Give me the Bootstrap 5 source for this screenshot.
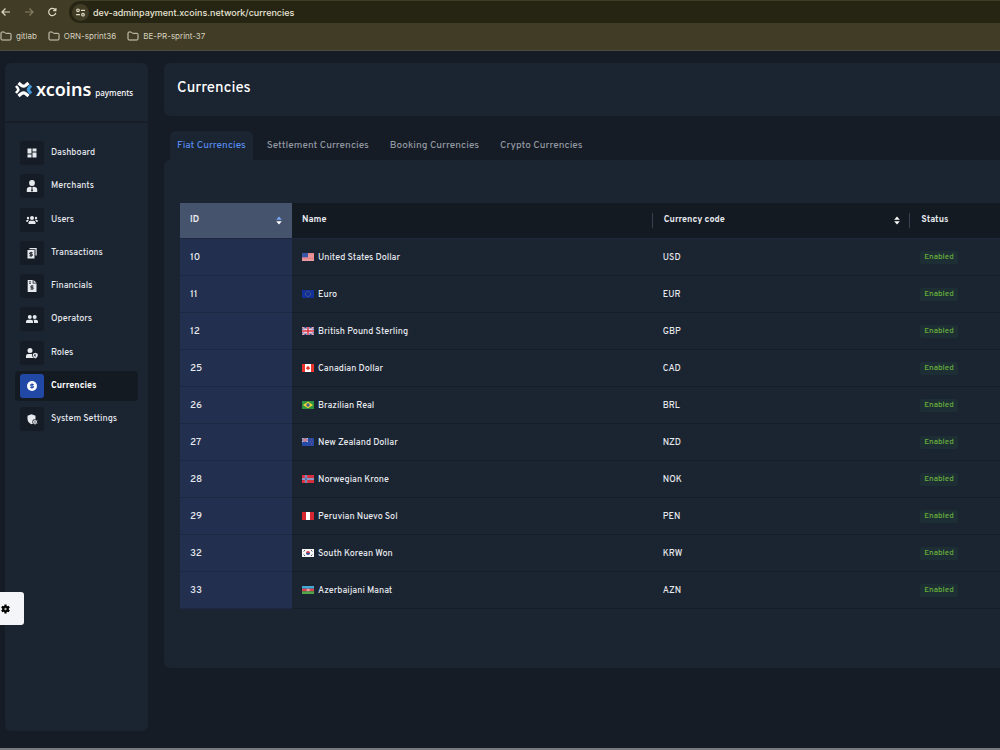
<!DOCTYPE html>
<html lang="en" data-bs-theme="dark">
<head>
<meta charset="utf-8">
<meta name="viewport" content="width=device-width, initial-scale=1">
<title>Currencies</title>
<link href="https://cdn.jsdelivr.net/npm/bootstrap@5.3.0/dist/css/bootstrap.min.css" rel="stylesheet">
<style>
  body { font-family: Overpass, Roboto, "Liberation Sans", sans-serif; font-size: 9px; font-weight: 500; line-height: 14px; background: #161c25; color: #e6e9ee; border-bottom: 2px solid #777b80; overflow-x: hidden; }
  svg { display: block; flex: none; }
  .browser-top { background: #403c26; color: #dedac5; font-family: Inter, sans-serif; height: 51px; border-bottom: 1px solid #4b4a3e; font-size: 8px; font-weight: 400; }
  .address-row { height: 25px; padding: 1px 0 2px 0; }
  .tool-btn { width: 23px; color: inherit; }
  .tool-btn svg { margin-left: -1px; }
  .tool-btn.dim { color: #858064; }
  .address-box { background: #262412; border-radius: 11px 0 0 11px; height: 22px; padding-left: 3px; gap: 4px; }
  .site-info { background: #403c26; width: 17px; height: 17px; color: inherit; }
  .address-box input { font-size: 9px; font-weight: 500; color: #e8e5d6; background: none; outline: 0; height: 20px; }
  .bookmarks { gap: 11px; height: 22px; }
  .bookmarks a { color: #d6d2bf; gap: 4px; }
  .panel { background: #1b2431; border-radius: 6px; }
  .app-shell { padding: 12px 0 17px 5px; gap: 16px; }
  .side-panel { width: 143px; }
  .brand { height: 60px; padding: 0 10px 6px; gap: 4px; border-bottom: 2px solid #171e28; color: #fff; }
  .brand-name { font-family: "Noto Sans", sans-serif; font-size: 18px; line-height: 22px; font-weight: 600; }
  .brand-sub { font-family: "Noto Sans", sans-serif; font-size: 8px; }
  .side-nav { padding: 15px 10px; min-height: 326px; }
  .side-nav .nav-link { height: 30px; padding: 0 5px; gap: 7px; color: #e6e9ee; border-radius: 4px; }
  .side-nav .icon-box { width: 24px; height: 24px; background: #161c25; border-radius: 3px; }
  .side-nav .nav-link.active { background: #141a22; color: #fff; font-weight: 700; }
  .side-nav .active .icon-box { background: #2148a4; }
  .title-panel { height: 53px; padding: 17px 13px; border-radius: 6px 0 0 6px; }
  .title-panel h1 { font-size: 15px; line-height: 18px; font-weight: 500; color: #fff; }
  .tab-strip { padding: 15px 0 0 6px; gap: 7px; }
  .tab-strip .nav-link { height: 29px; padding: 0 7px; font-size: 10px; color: #9298a2; border: 0; border-radius: 6px 6px 0 0; }
  .tab-strip .nav-link.active { background: #1b2431; color: #568aec; }
  .data-panel { padding: 43px 0 59px 16px; border-radius: 6px 0 0 6px; }
  .money-table { table-layout: fixed; width: 100%; color: #e6e9ee; }
  .money-table th { height: 35px; background: #141a22; padding: 0 10px; font-weight: 700; border-bottom: 1px solid #1f2740; }
  .money-table td { height: 37px; padding: 2px 10px 0; border-bottom: 1px solid #161c28; }
  .money-table th:first-child { background: #46536c; }
  .money-table td:first-child { background: #232f4e; border-bottom-color: #1e2842; font-size: 10px; }
  .money-table td svg { margin-bottom: 2px; }
  .col-id { width: 112px; } .col-name { width: 44%; } .col-code { width: 31.4%; }
  .ruled { border-left: 1px solid #374154; height: 15px; margin-left: -11px; padding-left: 11px; }
  .sort-btn { color: #fff; }
  .on-badge { background: #1d2f35; color: #69b03c; font-size: 8px; line-height: 13px; padding: 0 4px; border-radius: 2px; font-weight: 500; vertical-align: middle; }
  .gear-btn { left: 0; bottom: 125px; width: 24px; height: 33px; background: #f4f5f8; color: #000; border-radius: 0 3px 3px 0; padding: 0; }
</style>
</head>
<body class="d-flex flex-column min-vh-100 position-relative">

<svg width="0" height="0" class="position-absolute" aria-hidden="true">
  <symbol id="folder" viewBox="0 0 12 10"><path d="M1 2Q1 1 2 1H4.300L5.500 2.300H10Q11 2.300 11 3.300V8Q11 9 10 9H2Q1 9 1 8Z" fill="none" stroke="currentColor"/></symbol>
  <symbol id="sort" viewBox="0 0 6 9"><path d="M.2 3.700 3 .4 5.800 3.700Z" fill="var(--up, #fff)"/><path d="M.2 5.300 3 8.600 5.800 5.300Z" fill="#fff"/></symbol>
  <symbol id="us" viewBox="0 0 12 8"><path fill="#f2b6b9" d="M0 0h12v8H0z"/><path stroke="#df6a72" stroke-width=".7" d="M0 .4h12M0 1.700h12M0 3h12M0 4.300h12M0 5.600h12M0 7h12"/><path fill="#3b55a5" d="M0 0h6v4.300H0z"/></symbol>
  <symbol id="eu" viewBox="0 0 12 8"><path fill="#12309a" d="M0 0h12v8H0z"/><circle cx="6" cy="4" r="2.500" fill="none" stroke="#7d8158" stroke-width=".8" stroke-dasharray=".7 .6"/></symbol>
  <symbol id="gb" viewBox="0 0 12 8"><path fill="#34489a" d="M0 0h12v8H0z"/><path stroke="#eadfe8" stroke-width="1.600" d="M0 0 12 8M12 0 0 8"/><path stroke="#d4404f" stroke-width=".6" d="M0 0 12 8M12 0 0 8"/><path stroke="#fff" stroke-width="2.800" d="M6 0v8M0 4h12"/><path stroke="#d62f41" stroke-width="1.500" d="M6 0v8M0 4h12"/></symbol>
  <symbol id="ca" viewBox="0 0 12 8"><path fill="#fff" d="M0 0h12v8H0z"/><path fill="#e8332a" d="M0 0h3v8H0zM9 0h3v8H9zM6 1.500l.7 1.300.8-.2-.1 1.200.9.4-1.500 1.300H6.200V6.500h-.4V5.500H5.200L3.700 4.200l.9-.4-.1-1.200.8.2Z"/></symbol>
  <symbol id="br" viewBox="0 0 12 8"><path fill="#2f9440" d="M0 0h12v8H0z"/><path fill="#f4da38" d="M6 .8 11 4 6 7.200 1 4Z"/><circle cx="6" cy="4" r="1.700" fill="#283f86"/><path d="M4.500 3.600Q6 3.500 7.500 4.600" stroke="#ddd" stroke-width=".4" fill="none"/></symbol>
  <symbol id="nz" viewBox="0 0 12 8"><path fill="#244aa5" d="M0 0h12v8H0z"/><path stroke="#dfdce8" stroke-width="1" d="M0 0 6 4M6 0 0 4M3 0v4M0 2h6"/><path stroke="#d4404f" stroke-width=".7" d="M3 0v4M0 2h6"/><path fill="#c84b6d" d="M9 1h.8v.8H9zM8 3h.8v.8H8zM10 3h.8v.8H10zM9 5.500h.9v.9H9z"/></symbol>
  <symbol id="no" viewBox="0 0 12 8"><path fill="#d6303c" d="M0 0h12v8H0z"/><path stroke="#e5dbe8" stroke-width="2.200" d="M4 0v8M0 4h12"/><path stroke="#31509f" stroke-width="1.200" d="M4 0v8M0 4h12"/></symbol>
  <symbol id="pe" viewBox="0 0 12 8"><path fill="#fff" d="M0 0h12v8H0z"/><path fill="#d62631" d="M0 0h4v8H0zM8 0h4v8H8z"/></symbol>
  <symbol id="kr" viewBox="0 0 12 8"><path fill="#f7f7f7" d="M0 0h12v8H0z"/><path fill="#d53743" d="M4 4a2 2 0 0 1 4 0Z"/><path fill="#2a4b99" d="M4 4a2 2 0 0 0 4 0Z"/><path stroke="#222" stroke-width=".8" d="M1.700 2.500 3 1M9 1l1.300 1.500M1.700 5.500 3 7M9 7l1.300-1.500"/></symbol>
  <symbol id="az" viewBox="0 0 12 8"><path fill="#45a9d5" d="M0 0h12v2.700H0z"/><path fill="#dc4350" d="M0 2.700h12v2.600H0z"/><path fill="#52a548" d="M0 5.300h12V8H0z"/><circle cx="5.700" cy="4" r=".9" fill="none" stroke="#fff" stroke-width=".5"/><path fill="#fff" d="M6.700 3.500h1v1h-1z"/></symbol>
</svg>

<header class="browser-top flex-shrink-0">
  <div class="address-row d-flex align-items-center">
    <button class="btn tool-btn p-0" aria-label="Back"><svg width="12" height="10" viewBox="0 0 12 10" fill="none" stroke="currentColor" stroke-width="1.200"><path d="M10 5H2M5.500 1.500 2 5l3.500 3.500"/></svg></button>
    <button class="btn tool-btn dim p-0" aria-label="Forward"><svg width="12" height="10" viewBox="0 0 12 10" fill="none" stroke="currentColor" stroke-width="1.200"><path d="M2 5h8M6.500 1.500 10 5 6.500 8.500"/></svg></button>
    <button class="btn tool-btn p-0" aria-label="Reload"><svg width="12" height="10" viewBox="0 0 12 10" fill="none" stroke="currentColor" stroke-width="1.200"><path d="M9.300 3A3.600 3.600 0 1 0 9.800 5.800M9.900 1v2.700H7.200"/></svg></button>
    <div class="address-box d-flex align-items-center flex-grow-1">
      <button class="btn site-info rounded-circle p-0 d-flex align-items-center justify-content-center" aria-label="Site information"><svg width="11" height="9" viewBox="0 0 11 9" fill="none" stroke="currentColor" stroke-width="1.200"><circle cx="3" cy="2.300" r="1.300"/><path d="M6 2.300h4M1 6.700h4"/><circle cx="8" cy="6.700" r="1.300"/></svg></button>
      <input class="border-0 p-0 flex-grow-1" type="text" aria-label="Address" value="dev-adminpayment.xcoins.network/currencies">
    </div>
  </div>
  <nav class="bookmarks d-flex align-items-center" aria-label="Bookmarks">
    <a href="#" class="d-flex align-items-center text-decoration-none"><svg width="12" height="10"><use href="#folder"/></svg>gitlab</a>
    <a href="#" class="d-flex align-items-center text-decoration-none"><svg width="12" height="10"><use href="#folder"/></svg>ORN-sprint36</a>
    <a href="#" class="d-flex align-items-center text-decoration-none"><svg width="12" height="10"><use href="#folder"/></svg>BE-PR-sprint-37</a>
  </nav>
</header>

<div class="app-shell d-flex flex-grow-1">
  <aside class="side-panel panel flex-shrink-0">
    <div class="brand d-flex align-items-center">
      <svg width="17" height="17" viewBox="0 0 17 17" fill="none" stroke="#fff" stroke-width="3.200" stroke-linejoin="round"><path d="M3.500 2 6.200 4.300Q8.500 6 10.800 4.300L13.500 2M3.500 15l2.700-2.300q2.300-1.700 4.600 0L13.500 15"/><path d="m1 5 1.700 2q1.200 1.500 0 3L1 12" stroke-width="2.600"/><path d="m16 4.500-2 2.500q-1.300 1.500 0 3l2 2.500" stroke="#3f9ad9"/></svg>
      <div class="d-flex align-items-baseline gap-1"><span class="brand-name">xcoins</span><span class="brand-sub">payments</span></div>
    </div>
    <nav class="side-nav nav flex-column flex-nowrap justify-content-between" aria-label="Main">
      <a class="nav-link d-flex align-items-center" href="#"><span class="icon-box d-flex align-items-center justify-content-center"><svg width="12" height="12" viewBox="0 0 12 12" fill="currentColor"><path d="M1.500 1.500h4v5h-4zM6.500 1.500h4v3h-4zM1.500 7.500h4v3h-4zM6.500 5.500h4v5h-4z"/></svg></span>Dashboard</a>
      <a class="nav-link d-flex align-items-center" href="#"><span class="icon-box d-flex align-items-center justify-content-center"><svg width="12" height="12" viewBox="0 0 12 12" fill="currentColor"><circle cx="6" cy="3" r="2.900"/><path d="M.8 12V9.300Q.8 7.300 3 7L5 6.800l.7 1-.6 3.200.9.700.9-.7-.6-3.200.7-1L9 7q2.200.3 2.200 2.300V12Z"/></svg></span>Merchants</a>
      <a class="nav-link d-flex align-items-center" href="#"><span class="icon-box d-flex align-items-center justify-content-center"><svg width="12" height="12" viewBox="0 0 12 12" fill="currentColor"><circle cx="6" cy="4" r="2"/><circle cx="2" cy="4" r="1.200"/><circle cx="10" cy="4" r="1.200"/><path d="M2.500 10V8.500Q2.500 6.700 4.500 6.700h3q2 0 2 1.800V10ZM0 7.700Q0 5.800 1.500 5.800h1.700Q2 6.700 1.900 7.700ZM12 7.700q0-1.900-1.500-1.900H8.800q1.200.9 1.300 1.900Z"/></svg></span>Users</a>
      <a class="nav-link d-flex align-items-center" href="#"><span class="icon-box d-flex align-items-center justify-content-center"><svg width="12" height="12" viewBox="0 0 12 12" fill="currentColor"><path fill-rule="evenodd" d="M3.500 1h7.200v7.500H9.500V2.200h-6ZM1.500 3h7v8.500h-7Z"/><path d="M6.600 5.700H4.300q-.8 0-.8.700t.8.800h1.400q.8 0 .8.800t-.8.800H3.400M5 4.900v4.700" fill="none" stroke="#161c25"/></svg></span>Transactions</a>
      <a class="nav-link d-flex align-items-center" href="#"><span class="icon-box d-flex align-items-center justify-content-center"><svg width="12" height="12" viewBox="0 0 12 12" fill="currentColor"><path d="M1.700 0h5v3.500h3.800V12H1.700ZM7.500 0l3 2.700h-3Z"/><path d="M3 1.800h2M3 3.300h2M7.500 6H5.300q-.7 0-.7.800t.7.700h1.400q.7 0 .7.800t-.7.700H4.500M6 5v5" fill="none" stroke="#161c25" stroke-width=".8"/></svg></span>Financials</a>
      <a class="nav-link d-flex align-items-center" href="#"><span class="icon-box d-flex align-items-center justify-content-center"><svg width="12" height="12" viewBox="0 0 12 12" fill="currentColor"><circle cx="3.800" cy="4" r="2"/><circle cx="8.700" cy="4" r="2"/><path d="M0 10V8.500Q0 6.700 2 6.700h3q2 0 2 1.800V10ZM8 10h4V8.500q0-1.800-2-1.800H7.300Q8 7.400 8 8.500Z"/></svg></span>Operators</a>
      <a class="nav-link d-flex align-items-center" href="#"><span class="icon-box d-flex align-items-center justify-content-center"><svg width="12" height="12" viewBox="0 0 12 12" fill="currentColor"><circle cx="4" cy="3.500" r="2.500"/><path d="M0 11V9Q0 7 2 7h4l.3 2.500L8 11Z"/><path d="m9.300 5.800 2.400.9v1.500q0 2.200-2.400 3.300-2.400-1.100-2.400-3.300V6.700Z"/><path d="M9.500 7v3Q8 9.300 8 7.700Z" fill="#161c25"/></svg></span>Roles</a>
      <a class="nav-link active d-flex align-items-center" aria-current="page" href="#"><span class="icon-box d-flex align-items-center justify-content-center"><svg width="12" height="12" viewBox="0 0 12 12" fill="currentColor"><circle cx="6" cy="6" r="5"/><path d="M7.700 4.500H5.200q-.9 0-.9.800t.9.700h1.600q.9 0 .9.800t-.9.700H4.300M6 3.300v5.400" fill="none" stroke="#2148a4"/></svg></span>Currencies</a>
      <a class="nav-link d-flex align-items-center" href="#"><span class="icon-box d-flex align-items-center justify-content-center"><svg width="12" height="12" viewBox="0 0 12 12" fill="currentColor"><path d="m5.500 1.300 4 1.500V6Q6.300 6 6.300 8.800q0 1 .6 1.700l-1.400.7Q1.500 9.300 1.500 6V2.800Z"/><path d="M9 6.500v5M6.700 7.800l4.600 2.500M11.300 7.800l-4.600 2.500" stroke="currentColor"/><circle cx="9" cy="9" r="1.700"/><circle cx="9" cy="9" r=".7" fill="#161c25"/></svg></span>System Settings</a>
    </nav>
  </aside>

  <main class="flex-grow-1">
    <div class="title-panel panel"><h1 class="m-0">Currencies</h1></div>
    <nav class="tab-strip nav" aria-label="Currency groups">
      <a class="nav-link active d-flex align-items-center" aria-current="page" href="#">Fiat Currencies</a>
      <a class="nav-link d-flex align-items-center" href="#">Settlement Currencies</a>
      <a class="nav-link d-flex align-items-center" href="#">Booking Currencies</a>
      <a class="nav-link d-flex align-items-center" href="#">Crypto Currencies</a>
    </nav>
    <section class="data-panel panel">
      <table class="money-table align-middle">
        <thead><tr>
          <th scope="col" class="col-id"><div class="d-flex justify-content-between align-items-center">ID<button class="btn sort-btn d-flex p-0 border-0" aria-label="Sort by ID"><svg width="6" height="9" style="--up:#79a5f5"><use href="#sort"/></svg></button></div></th>
          <th scope="col" class="col-name">Name</th>
          <th scope="col" class="col-code"><div class="ruled d-flex justify-content-between align-items-center">Currency code<button class="btn sort-btn d-flex p-0 border-0" aria-label="Sort by currency code"><svg width="6" height="9"><use href="#sort"/></svg></button></div></th>
          <th scope="col"><div class="ruled d-flex align-items-center">Status</div></th>
        </tr></thead>
        <tbody>
          <tr><td>10</td><td><div class="d-flex align-items-center gap-1"><svg width="12" height="8"><use href="#us"/></svg>United States Dollar</div></td><td>USD</td><td><span class="on-badge d-inline-block">Enabled</span></td></tr>
          <tr><td>11</td><td><div class="d-flex align-items-center gap-1"><svg width="12" height="8"><use href="#eu"/></svg>Euro</div></td><td>EUR</td><td><span class="on-badge d-inline-block">Enabled</span></td></tr>
          <tr><td>12</td><td><div class="d-flex align-items-center gap-1"><svg width="12" height="8"><use href="#gb"/></svg>British Pound Sterling</div></td><td>GBP</td><td><span class="on-badge d-inline-block">Enabled</span></td></tr>
          <tr><td>25</td><td><div class="d-flex align-items-center gap-1"><svg width="12" height="8"><use href="#ca"/></svg>Canadian Dollar</div></td><td>CAD</td><td><span class="on-badge d-inline-block">Enabled</span></td></tr>
          <tr><td>26</td><td><div class="d-flex align-items-center gap-1"><svg width="12" height="8"><use href="#br"/></svg>Brazilian Real</div></td><td>BRL</td><td><span class="on-badge d-inline-block">Enabled</span></td></tr>
          <tr><td>27</td><td><div class="d-flex align-items-center gap-1"><svg width="12" height="8"><use href="#nz"/></svg>New Zealand Dollar</div></td><td>NZD</td><td><span class="on-badge d-inline-block">Enabled</span></td></tr>
          <tr><td>28</td><td><div class="d-flex align-items-center gap-1"><svg width="12" height="8"><use href="#no"/></svg>Norwegian Krone</div></td><td>NOK</td><td><span class="on-badge d-inline-block">Enabled</span></td></tr>
          <tr><td>29</td><td><div class="d-flex align-items-center gap-1"><svg width="12" height="8"><use href="#pe"/></svg>Peruvian Nuevo Sol</div></td><td>PEN</td><td><span class="on-badge d-inline-block">Enabled</span></td></tr>
          <tr><td>32</td><td><div class="d-flex align-items-center gap-1"><svg width="12" height="8"><use href="#kr"/></svg>South Korean Won</div></td><td>KRW</td><td><span class="on-badge d-inline-block">Enabled</span></td></tr>
          <tr><td>33</td><td><div class="d-flex align-items-center gap-1"><svg width="12" height="8"><use href="#az"/></svg>Azerbaijani Manat</div></td><td>AZN</td><td><span class="on-badge d-inline-block">Enabled</span></td></tr>
        </tbody>
      </table>
    </section>
  </main>
</div>

<button class="btn gear-btn position-fixed border-0" aria-label="Settings panel"><svg width="11" height="10" viewBox="0 0 11 10" fill="none" stroke="currentColor"><circle cx="5.500" cy="5" r="2.300" stroke-width="2"/><path d="M5.500.6v8.800M1.700 2.800l7.600 4.400M9.300 2.800 1.700 7.200" stroke-width="2.200"/><circle cx="5.500" cy="5" r="1" fill="#fff" stroke="#777" stroke-width=".6"/></svg></button>

<script src="https://cdn.jsdelivr.net/npm/bootstrap@5.3.0/dist/js/bootstrap.bundle.min.js"></script>
</body>
</html>
